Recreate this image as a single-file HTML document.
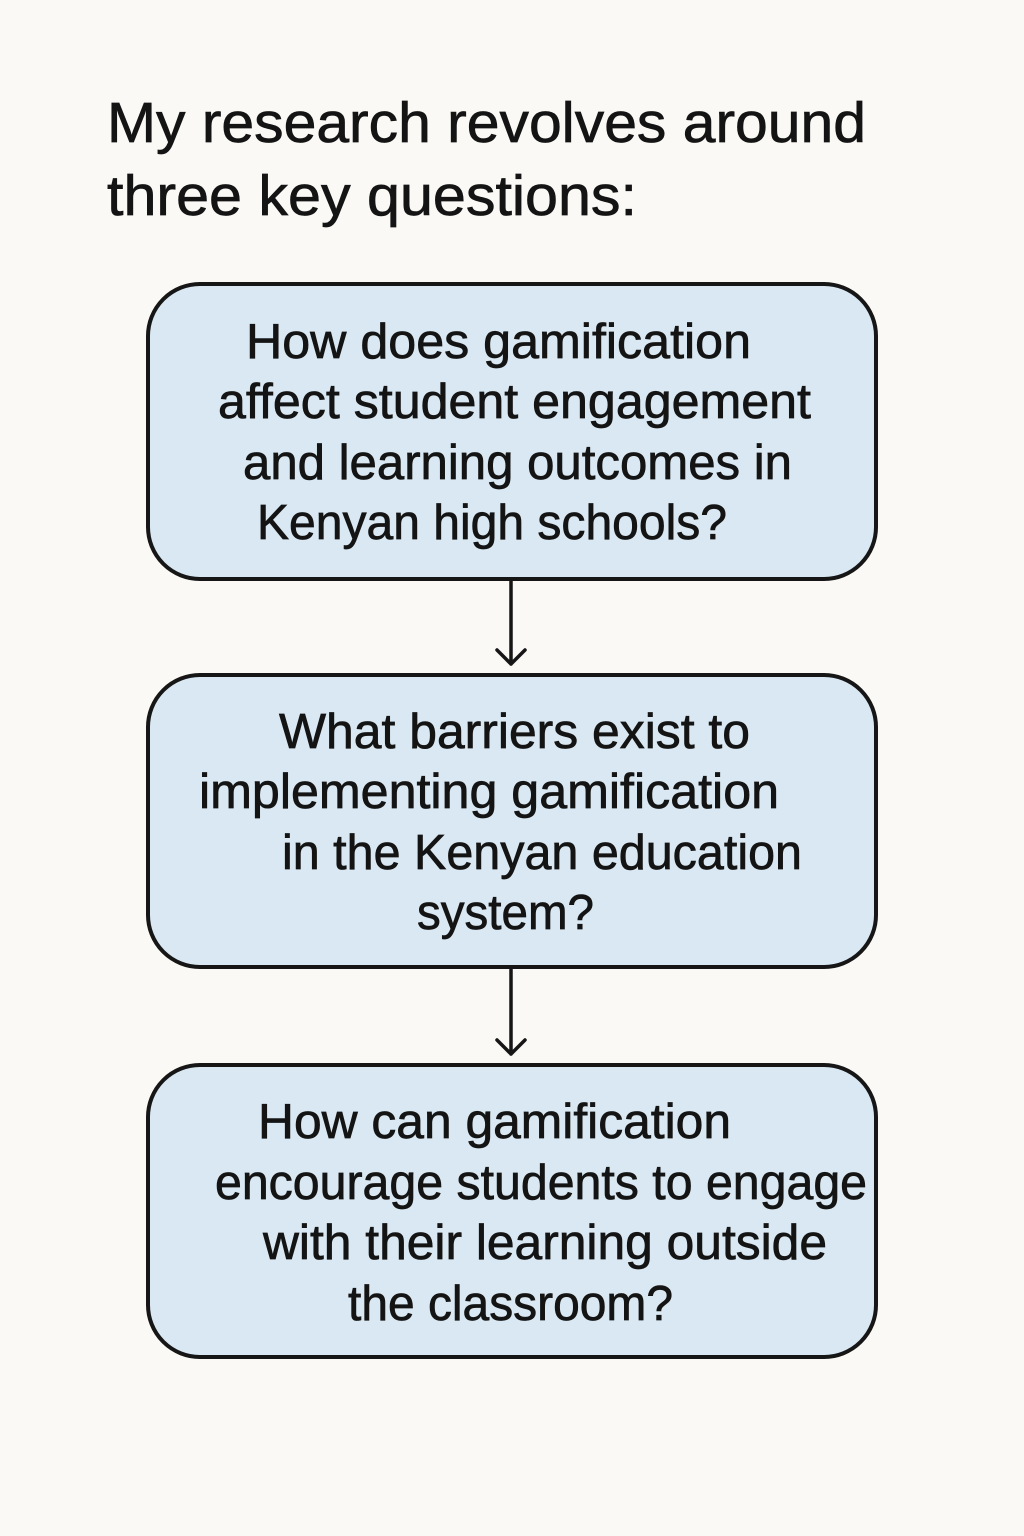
<!DOCTYPE html>
<html><head><meta charset="utf-8"><style>
html,body{margin:0;padding:0;background:#faf9f6;}
svg{display:block}
text{font-family:"Liberation Sans","DejaVu Sans",sans-serif;fill:#141414;stroke:#141414;stroke-width:0.7;}
</style></head><body>
<svg width="1024" height="1536" viewBox="0 0 1024 1536" xmlns="http://www.w3.org/2000/svg">
<rect width="1024" height="1536" fill="#faf9f6"/>
<g font-size="57">
<text x="107" y="142" textLength="759" lengthAdjust="spacingAndGlyphs">My research revolves around</text>
<text x="107" y="215" textLength="530" lengthAdjust="spacingAndGlyphs">three key questions:</text>
</g>
<g fill="#d9e8f2" stroke="#161616" stroke-width="4">
<rect x="148" y="284" width="728" height="295" rx="52"/>
<rect x="148" y="675" width="728" height="292" rx="52"/>
<rect x="148" y="1065" width="728" height="292" rx="52"/>
</g>
<g stroke="#161616" stroke-width="3.5" fill="none" stroke-linecap="round" stroke-linejoin="round">
<path d="M511 581 V664 M497 650 L511 664 L525 650"/>
<path d="M511 969 V1054 M497 1040 L511 1054 L525 1040"/>
</g>
<g font-size="49">
<text x="246" y="358" textLength="505" lengthAdjust="spacingAndGlyphs">How does gamification</text>
<text x="218" y="418" textLength="593" lengthAdjust="spacingAndGlyphs">affect student engagement</text>
<text x="243" y="479" textLength="549" lengthAdjust="spacingAndGlyphs">and learning outcomes in</text>
<text x="257" y="539" textLength="470" lengthAdjust="spacingAndGlyphs">Kenyan high schools?</text>
<text x="279" y="748" textLength="471" lengthAdjust="spacingAndGlyphs">What barriers exist to</text>
<text x="199" y="808" textLength="580" lengthAdjust="spacingAndGlyphs">implementing gamification</text>
<text x="282" y="869" textLength="520" lengthAdjust="spacingAndGlyphs">in the Kenyan education</text>
<text x="417" y="929" textLength="177" lengthAdjust="spacingAndGlyphs">system?</text>
<text x="258" y="1138" textLength="473" lengthAdjust="spacingAndGlyphs">How can gamification</text>
<text x="215" y="1199" textLength="652" lengthAdjust="spacingAndGlyphs">encourage students to engage</text>
<text x="263" y="1259" textLength="564" lengthAdjust="spacingAndGlyphs">with their learning outside</text>
<text x="348" y="1320" textLength="325" lengthAdjust="spacingAndGlyphs">the classroom?</text>
</g>
</svg>
</body></html>
